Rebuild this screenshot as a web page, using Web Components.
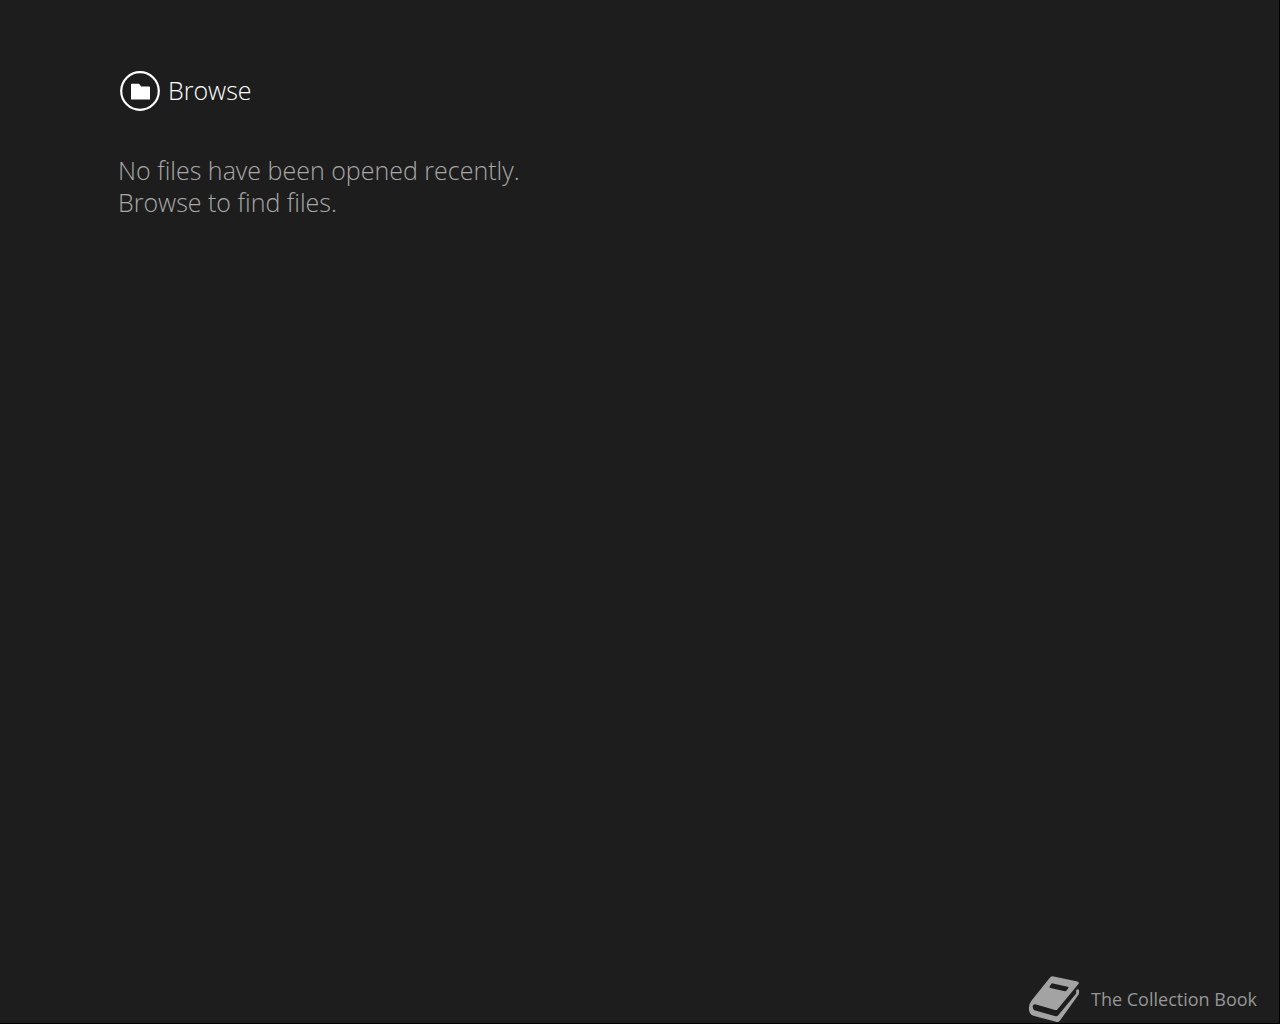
<!DOCTYPE html>
<html lang="en">
<head>
<meta charset="utf-8">
<title>Recent files</title>
<style>
  body { margin: 0; background: #1d1d1d; font-family: "Open Sans", "Noto Sans", sans-serif; }
</style>
</head>
<body>
<recent-files-page>
  <browse-button>Browse</browse-button>
  <empty-message>
    <span>No files have been opened recently.</span>
    <span>Browse to find files.</span>
  </empty-message>
  <app-brand slot="footer">The Collection Book</app-brand>
</recent-files-page>

<script>
class ShadowElement extends HTMLElement {
  constructor() {
    super();
    this.attachShadow({ mode: "open" }).innerHTML = this.constructor.markup;
  }
}

customElements.define("recent-files-page", class extends ShadowElement {
  static markup = `
    <style>
      :host { display: flex; flex-direction: column; justify-content: space-between;
        box-sizing: border-box; min-height: 100vh; background: #1d1d1d;
        border-right: 1px solid #000; border-bottom: 1px solid #000; }
      main { display: flex; flex-direction: column; align-items: flex-start; gap: 43px;
        padding: 71px 118px 0; }
      footer { display: flex; justify-content: flex-end; padding: 0 22px; }
    </style>
    <main><slot></slot></main>
    <footer><slot name="footer"></slot></footer>`;
});

customElements.define("browse-button", class extends ShadowElement {
  static markup = `
    <style>
      :host { display: block; }
      button { display: flex; align-items: flex-start; gap: 8px; margin: 0; padding: 0 2px;
        border: 0; background: none; color: #fff; font: 300 25px/38px "Open Sans", "Noto Sans", sans-serif;
        cursor: pointer; }
      svg { display: block; flex: none; }
    </style>
    <button type="button">
      <svg width="40" height="40" viewBox="0 0 40 40" aria-hidden="true">
        <circle cx="20" cy="20" r="18.8" fill="none" stroke="#fff" stroke-width="2.2"/>
        <path fill="#fff" d="M11 28.5V13.6q0-.9.9-.9h6.6q.6 0 1 .6l1.7 2.2h7.9q.9 0 .9.9v12.1z"/>
      </svg>
      <slot></slot>
    </button>`;
});

customElements.define("empty-message", class extends ShadowElement {
  static markup = `
    <style>
      :host { display: block; color: #a8a8a8; font-size: 25px; font-weight: 300; line-height: 32px; }
      p { margin: 0; display: flex; flex-direction: column; }
    </style>
    <p><slot></slot></p>`;
});

customElements.define("app-brand", class extends ShadowElement {
  static markup = `
    <style>
      :host { display: flex; align-items: center; gap: 11px; color: #969696;
        font-size: 18px; line-height: 24px; }
      svg { display: block; flex: none; }
    </style>
    <svg width="52" height="48" viewBox="0 0 52 48" aria-hidden="true">
      <path fill="#a3a3a3" fill-rule="evenodd" d="M24.6 1.2L49.5 6.6Q51.6 7.3 50.4 9L29.6 34.2Q28.6 35.4 27 35L8.2 29.6Q5.4 28.6 4.8 30.8Q4.4 33.4 6.4 35.2L27.6 41.2Q29.2 41.6 30.2 40.2L48.2 18.4V14.8L50.5 14.2Q51.7 16.8 50.6 19.4L32 45.6Q31 47.2 29 46.9L5.4 40.8Q.4 38.8 1 32.4Q1.2 28.2 3.8 25.2L21.8 2.7Q23 .9 24.6 1.2zM23.6 8.6L21.6 11.4Q21 12.6 22.4 13L36.8 16.2Q37.9 16.4 38.6 15.4L40.4 13Q40.8 12 39.6 11.7L25 8.4Q24.2 8.1 23.6 8.6z"/>
    </svg>
    <span><slot></slot></span>`;
});
</script>
</body>
</html>
